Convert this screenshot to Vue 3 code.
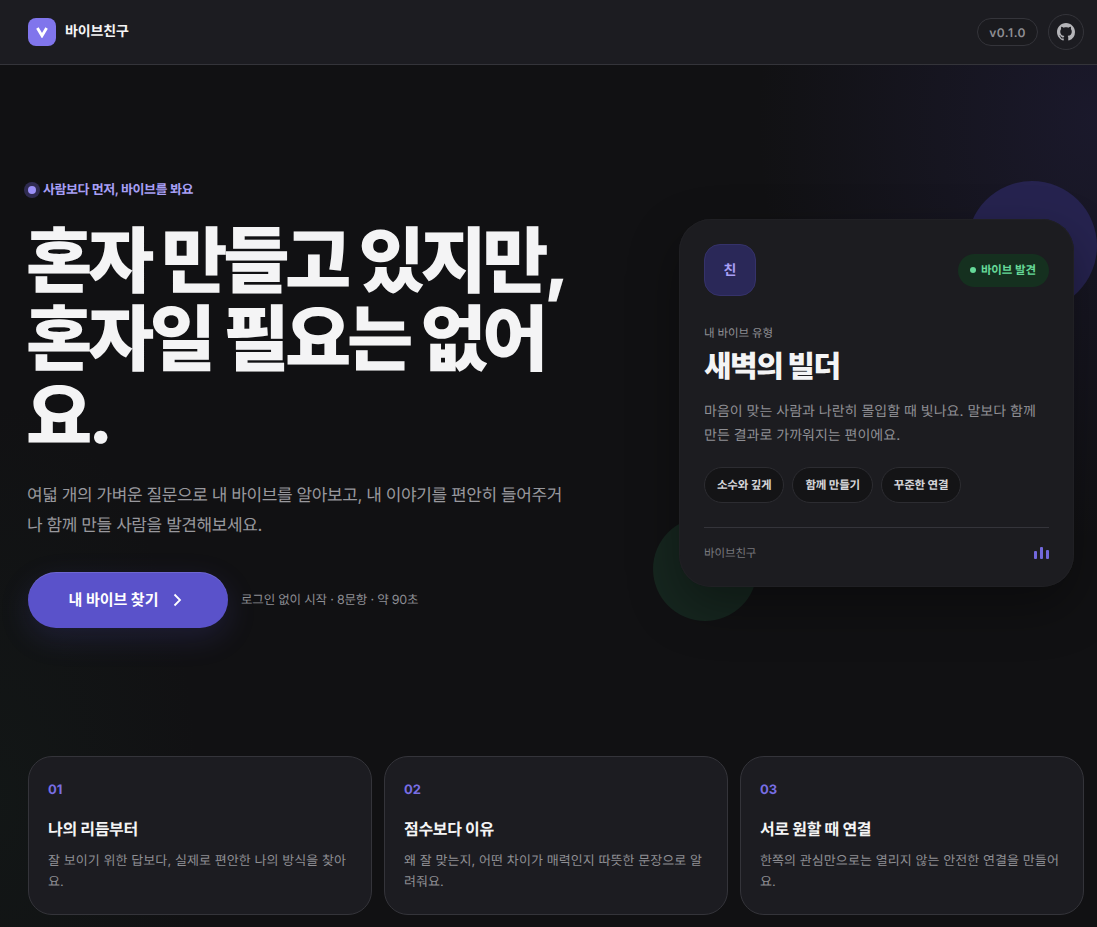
<script setup>
const tags = ['소수와 깊게', '함께 만들기', '꾸준한 연결']
const features = [
  { n: '01', t: '나의 리듬부터', d: '잘 보이기 위한 답보다, 실제로 편안한 나의 방식을 찾아요.' },
  { n: '02', t: '점수보다 이유', d: '왜 잘 맞는지, 어떤 차이가 매력인지 따뜻한 문장으로 알려줘요.' },
  { n: '03', t: '서로 원할 때 연결', d: '한쪽의 관심만으로는 열리지 않는 안전한 연결을 만들어요.' },
]
</script>

<template>
  <div class="page">
    <header class="top">
      <div class="brand">
        <span class="logo">
          <svg width="14" height="11" viewBox="0 0 14 11"><path d="M2.4 1 L7 8.8 L11.6 1" fill="none" stroke="#fff" stroke-width="2.8"/></svg>
        </span>
        <span class="name">바이브친구</span>
      </div>
      <div class="actions">
        <span class="ver">v0.1.0</span>
        <span class="gh">
          <svg width="18" height="18" viewBox="0 0 16 16" fill="#b4b4b8"><path d="M8 0C3.58 0 0 3.58 0 8c0 3.54 2.29 6.53 5.47 7.59.4.07.55-.17.55-.38 0-.19-.01-.82-.01-1.49-2.01.37-2.53-.49-2.69-.94-.09-.23-.48-.94-.82-1.13-.28-.15-.68-.52-.01-.53.63-.01 1.08.58 1.23.82.72 1.21 1.87.87 2.33.66.07-.52.28-.87.51-1.07-1.78-.2-3.64-.89-3.64-3.95 0-.87.31-1.59.82-2.15-.08-.2-.36-1.02.08-2.12 0 0 .67-.21 2.2.82.64-.18 1.32-.27 2-.27s1.36.09 2 .27c1.53-1.04 2.2-.82 2.2-.82.44 1.1.16 1.92.08 2.12.51.56.82 1.27.82 2.15 0 3.07-1.87 3.75-3.65 3.95.29.25.54.73.54 1.48 0 1.07-.01 1.93-.01 2.2 0 .21.15.46.55.38A8.01 8.01 0 0 0 16 8c0-4.42-3.58-8-8-8z"/></svg>
        </span>
      </div>
    </header>

    <main class="main">
      <section class="hero">
        <div class="copy">
          <div class="eyebrow"><i class="pulse"></i>사람보다 먼저, 바이브를 봐요</div>
          <h1>혼자 만들고 있지만,<br>혼자일 필요는 없어요.</h1>
          <p class="lead">여덟 개의 가벼운 질문으로 내 바이브를 알아보고, 내 이야기를 편안히 들어주거나 함께 만들 사람을 발견해보세요.</p>
          <div class="cta-row">
            <button class="cta">
              내 바이브 찾기
              <svg width="20" height="20" viewBox="0 0 20 20"><path d="M7.5 4.5 L13 10 L7.5 15.5" fill="none" stroke="#fff" stroke-width="1.8"/></svg>
            </button>
            <span class="note">로그인 없이 시작 · 8문항 · 약 90초</span>
          </div>
        </div>

        <div class="visual">
          <span class="orb orb-purple"></span>
          <span class="orb orb-green"></span>
          <article class="card">
            <div class="card-head">
              <span class="avatar">친</span>
              <span class="found"><i></i>바이브 발견</span>
            </div>
            <div class="label">내 바이브 유형</div>
            <h2>새벽의 빌더</h2>
            <p class="desc">마음이 맞는 사람과 나란히 몰입할 때 빛나요. 말보다 함께 만든 결과로 가까워지는 편이에요.</p>
            <div class="tags"><span v-for="t in tags" :key="t" class="tag">{{ t }}</span></div>
            <div class="card-foot">
              <span>바이브친구</span>
              <span class="bars"><i></i><i></i><i></i></span>
            </div>
          </article>
        </div>
      </section>

      <section class="features">
        <article v-for="f in features" :key="f.n" class="feature">
          <div class="num">{{ f.n }}</div>
          <h3>{{ f.t }}</h3>
          <p>{{ f.d }}</p>
        </article>
      </section>
    </main>
  </div>
</template>

<style>
html, body { margin: 0; background: #111113; }
</style>

<style scoped>
* { box-sizing: border-box; }
.page {
  width: 1097px;
  height: 927px;
  overflow: hidden;
  font-family: Inter, "Noto Sans CJK KR", sans-serif;
  text-rendering: geometricPrecision;
  color: #f4f4f5;
  background:
    radial-gradient(ellipse 340px 420px at 100% 120px, rgba(60, 52, 130, 0.22), transparent 100%),
    radial-gradient(ellipse 200px 400px at 0 800px, rgba(30, 70, 50, 0.10), transparent 100%),
    #111113;
}
.top {
  height: 65px;
  display: flex;
  align-items: center;
  justify-content: space-between;
  padding: 0 13px 0 28px;
  background: #1c1c21;
  border-bottom: 1px solid #34343a;
}
.brand { display: flex; align-items: center; gap: 9px; }
.logo {
  width: 28px; height: 28px; border-radius: 8px; background: #8075ec;
  display: flex; align-items: center; justify-content: center;
}
.name { font-size: 14px; font-weight: 700; letter-spacing: -0.01em; line-height: 20px; margin-top: -1px; }
.actions { display: flex; align-items: center; gap: 10px; }
.ver {
  height: 28px; padding: 0 11px; border-radius: 14px; border: 1px solid #34343a; background: #1a1a1e;
  display: flex; align-items: center; font-size: 12px; font-weight: 600; color: #8e8e93; letter-spacing: 0.04em;
}
.gh {
  width: 36px; height: 36px; border-radius: 50%; border: 1px solid #34343a;
  display: flex; align-items: center; justify-content: center;
}
.main { padding: 0 13px 0 28px; }
.hero {
  height: 678px;
  display: flex;
  align-items: center;
  justify-content: space-between;
}
.copy { width: 540px; }
.eyebrow {
  display: flex; align-items: center; gap: 6px;
  font-size: 13px; font-weight: 600; line-height: 18px; color: #a79ff5; letter-spacing: -0.035em; margin-left: -1px;
  padding-top: 1px; height: 18px;
}
.pulse {
  width: 8px; height: 8px; border-radius: 50%; background: #9b90f7;
  box-shadow: 0 0 0 4px rgba(124, 111, 240, 0.28); margin-left: 1px; margin-right: 1px;
}
h1 {
  margin: 25px 0 0 -2px;
  font-size: 72px;
  line-height: 78px;
  font-weight: 800;
  letter-spacing: -0.06em;
  color: #f4f4f5;
}
.lead {
  margin: 24px 0 0 -1px;
  font-size: 17px;
  line-height: 30px;
  color: #98989d;
  letter-spacing: -0.025em;
}
.cta-row { display: flex; align-items: center; gap: 13px; margin-top: 31px; }
.cta {
  width: 200px; height: 56px; border: 0; border-radius: 28px; background: #5a52ca;
  color: #fff; font: inherit; font-size: 15px; font-weight: 700; line-height: 20px;
  display: flex; align-items: center; justify-content: center; gap: 9px;
  box-shadow: 0 10px 30px rgba(91, 82, 204, 0.18), inset 0 1px 0 rgba(255,255,255,.12);
}
.note { font-size: 12.5px; line-height: 20px; color: #8e8e93; letter-spacing: -0.015em; margin-top: 2px; }
.visual { position: relative; width: 395px; margin-right: 10px; margin-bottom: 2px; }
.orb { position: absolute; border-radius: 50%; }
.orb-purple { width: 130px; height: 130px; right: -23px; top: -38px; background: #26234f; }
.orb-green { width: 104px; height: 104px; left: -26px; bottom: -34px; background: #16261f; }
.card {
  position: relative;
  height: 368px;
  border-radius: 32px;
  padding: 25px 25px 0;
  background: #1c1c20;
  box-shadow: 0 20px 50px rgba(0, 0, 0, 0.35), inset 0 0 0 1px #202024;
}
.card-head { display: flex; align-items: center; justify-content: space-between; }
.avatar {
  width: 52px; height: 52px; border-radius: 16px; background: #2a2858; border: 1px solid #35326a;
  display: flex; align-items: center; justify-content: center;
  font-size: 14px; font-weight: 700; color: #a79ff5;
}
.found {
  height: 33px; padding: 0 13px 0 12px; border-radius: 17px; background: #15301f;
  display: flex; align-items: center; gap: 5px;
  font-size: 11.5px; font-weight: 600; color: #66d998; letter-spacing: -0.01em;
}
.found i { width: 6px; height: 6px; border-radius: 50%; background: #66d998; }
.label { margin-top: 28px; font-size: 11.5px; line-height: 18px; color: #8e8e93; letter-spacing: -0.01em; }
h2 { margin: 5px 0 0; font-size: 30px; line-height: 40px; font-weight: 800; letter-spacing: -0.05em; color: #f4f4f5; }
.desc { margin: 13px 0 0; font-size: 14px; line-height: 24px; color: #8e8e93; }
.tags { display: flex; gap: 8px; margin-top: 19px; }
.tag {
  height: 36px; padding: 0 12px; border-radius: 18px; background: #141416; border: 1px solid #2c2c31;
  display: flex; align-items: center; font-size: 11.5px; font-weight: 600; color: #d6d6da; letter-spacing: -0.02em;
}
.card-foot {
  margin-top: 24px; padding-top: 16px; border-top: 1px solid #34343a;
  display: flex; align-items: center; justify-content: space-between;
  font-size: 11.5px; line-height: 18px; color: #77777c; letter-spacing: -0.01em;
}
.bars { display: flex; align-items: flex-end; gap: 3px; height: 12px; }
.bars i { width: 3px; background: #7268dc; height: 8px; border-radius: 1px; }
.bars i:nth-child(2) { height: 12px; }
.bars i:nth-child(3) { height: 9px; }
.features { margin-top: 13px; display: grid; grid-template-columns: repeat(3, 1fr); gap: 12px; }
.feature {
  height: 159px; padding: 24px 19px 0; border-radius: 24px; background: #1c1c21; border: 1px solid #34343a;
}
.num { font-size: 13px; line-height: 18px; font-weight: 700; color: #786ee4; }
h3 { margin: 18px 0 0; font-size: 16px; line-height: 24px; font-weight: 700; letter-spacing: -0.02em; color: #f4f4f5; }
.feature p { margin: 10px 0 0; font-size: 13px; line-height: 21px; color: #8e8e93; letter-spacing: 0.005em; }
</style>
